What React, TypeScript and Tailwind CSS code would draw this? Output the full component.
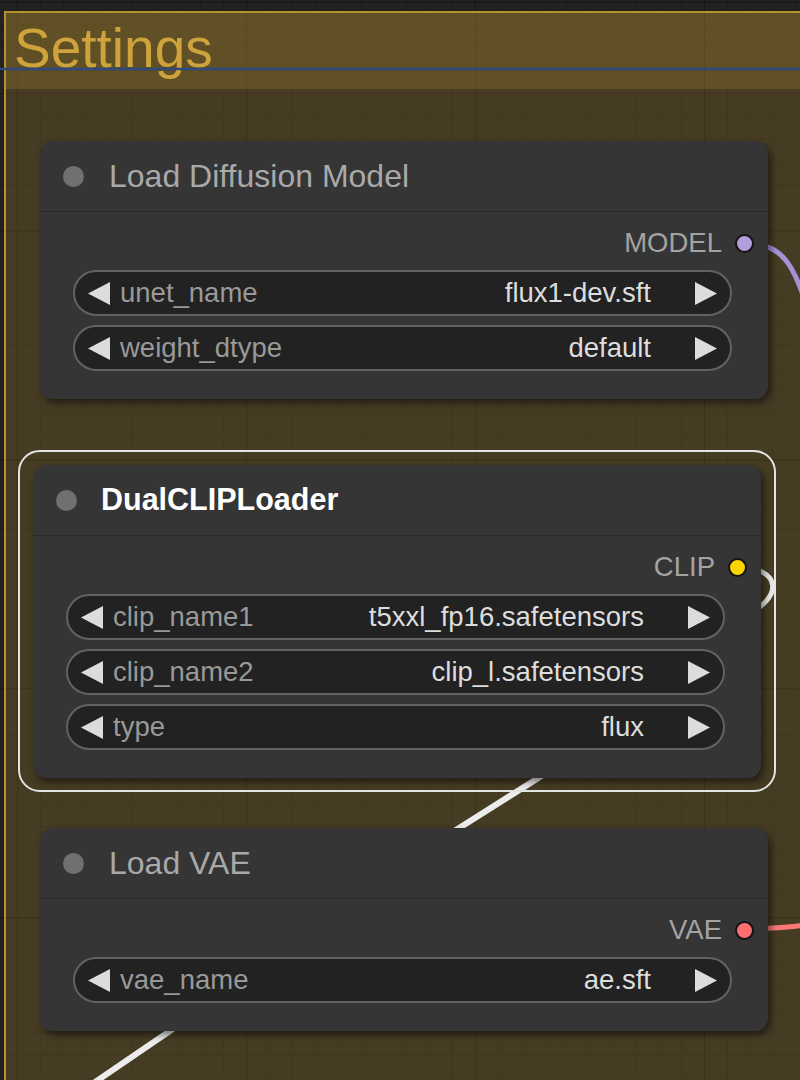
import React from "react";

type Widget = { name: string; value: string };

type NodeProps = {
  title: string;
  selected?: boolean;
  slot: string;
  dotClass: string;
  widgets: Widget[];
  className: string;
};

const Arrow = ({ dir }: { dir: "left" | "right" }) => (
  <svg width="22" height="23" viewBox="0 0 22 23" className="shrink-0">
    {dir === "left" ? (
      <polygon points="22,0 22,23 0,11.5" fill="#dcdcdc" />
    ) : (
      <polygon points="0,0 0,23 22,11.5" fill="#dcdcdc" />
    )}
  </svg>
);

const ComboWidget = ({ name, value }: Widget) => (
  <div className="ml-[33px] mr-[36px] flex h-[46px] items-center rounded-full border-2 border-[#626262] bg-[#222222] px-[13px]">
    <Arrow dir="left" />
    <span className="ml-[10px] text-[27.5px] text-[#999999]">{name}</span>
    <span className="ml-auto mr-[44px] text-[27.5px] text-[#dddddd]">{value}</span>
    <Arrow dir="right" />
  </div>
);

const GraphNode = ({ title, selected, slot, dotClass, widgets, className }: NodeProps) => (
  <div
    className={`absolute w-[728px] rounded-[13px] bg-[#353535] pb-[28px] shadow-[3px_4px_7px_rgba(0,0,0,0.5)] ${className}`}
  >
    <div className="flex h-[71px] items-center border-b border-[#2a2a2a] pl-[23px]">
      <div className="h-[21px] w-[21px] rounded-full bg-[#707070]" />
      <span
        className={
          selected
            ? "ml-[24px] text-[30.5px] font-bold text-white"
            : "ml-[25px] text-[32px] text-[#a9a9a9]"
        }
      >
        {title}
      </span>
    </div>
    <div className="mt-[8px] flex h-[46px] items-center justify-end gap-[13px] pr-[14px]">
      <span className="text-[27.5px] text-[#a3a3a3]">{slot}</span>
      <div className={`h-[19px] w-[19px] rounded-full border-2 border-[#141414] ${dotClass}`} />
    </div>
    <div className="mt-[4px] flex flex-col gap-[9px]">
      {widgets.map((w) => (
        <ComboWidget key={w.name} name={w.name} value={w.value} />
      ))}
    </div>
  </div>
);

const CanvasGrid = () => (
  <svg className="absolute inset-0" width="800" height="1080">
    <defs>
      <pattern id="minor" width="22.9" height="22.9" x="17" y="1.4" patternUnits="userSpaceOnUse">
        <path d="M 22.9 0 L 0 0 0 22.9" fill="none" stroke="rgba(0,0,0,0.25)" strokeWidth="1.3" />
      </pattern>
      <pattern id="major" width="229" height="229" x="17" y="1.4" patternUnits="userSpaceOnUse">
        <path d="M 229 0 L 0 0 0 229" fill="none" stroke="rgba(0,0,0,0.25)" strokeWidth="2" />
      </pattern>
    </defs>
    <rect width="800" height="1080" fill="url(#minor)" />
    <rect width="800" height="1080" fill="url(#major)" />
  </svg>
);

const Links = () => (
  <svg className="absolute inset-0" width="800" height="1080">
    <path d="M 0 69 L 800 69" stroke="#2f4a7e" strokeWidth="2.5" fill="none" />
    <path d="M 740 243 C 785 243, 792 262, 812 320" stroke="#a792d8" strokeWidth="5" fill="none" />
    <path d="M 735 567 C 785 567, 782 600, 745 615" stroke="#e6e6e6" strokeWidth="5" fill="none" />
    <path d="M 600 739 L 380 878" stroke="#ececec" strokeWidth="6" fill="none" />
    <path d="M 230 990 L 60 1106" stroke="#ececec" strokeWidth="6" fill="none" />
    <path d="M 740 929 C 775 929, 785 927, 810 925" stroke="#ff7878" strokeWidth="5" fill="none" />
  </svg>
);

export default function App() {
  return (
    <div className="relative h-[1080px] w-[800px] overflow-hidden bg-[#222222] font-['Liberation_Sans',Arial,sans-serif]">
      <CanvasGrid />

      <div className="absolute left-[4px] top-[11px] h-[1100px] w-[830px] border-2 border-[#b8902c] bg-[#b58b2a]/25">
        <div className="h-[76px] bg-[#b58b2a]/25 pl-[8px] pt-[8px]">
          <span className="text-[55px] leading-none text-[#cfa33b]">Settings</span>
        </div>
      </div>

      <Links />

      <GraphNode
        className="left-[40px] top-[141px]"
        title="Load Diffusion Model"
        slot="MODEL"
        dotClass="bg-[#b39ddb]"
        widgets={[
          { name: "unet_name", value: "flux1-dev.sft" },
          { name: "weight_dtype", value: "default" },
        ]}
      />

      <div className="absolute left-[18px] top-[450px] h-[342px] w-[758px] rounded-[22px] border-2 border-[#e4e4e4]" />

      <GraphNode
        className="left-[33px] top-[465px]"
        title="DualCLIPLoader"
        selected
        slot="CLIP"
        dotClass="bg-[#ffd500]"
        widgets={[
          { name: "clip_name1", value: "t5xxl_fp16.safetensors" },
          { name: "clip_name2", value: "clip_l.safetensors" },
          { name: "type", value: "flux" },
        ]}
      />

      <GraphNode
        className="left-[40px] top-[828px]"
        title="Load VAE"
        slot="VAE"
        dotClass="bg-[#ff6e6e]"
        widgets={[{ name: "vae_name", value: "ae.sft" }]}
      />
    </div>
  );
}
